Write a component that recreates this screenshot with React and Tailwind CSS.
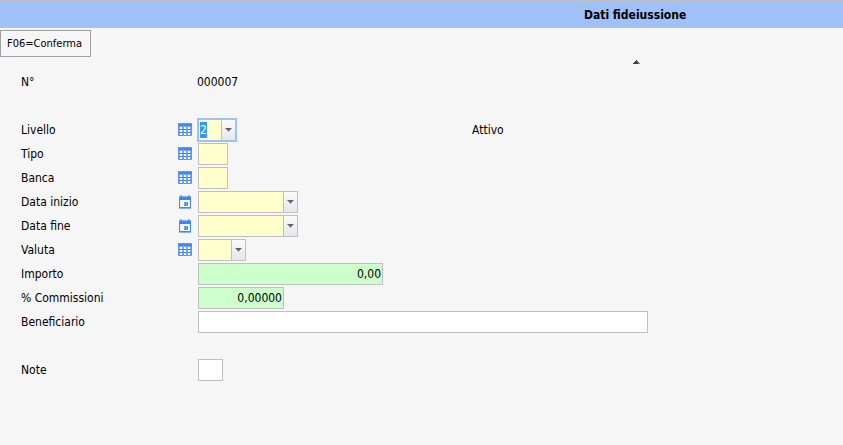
import { useEffect, useRef } from "react";

function GridIcon() {
  return (
    <svg width="14" height="14" viewBox="0 0 14 14" shapeRendering="crispEdges" aria-hidden="true">
      <path fill="#7aa8fa" d="M0 0h14v13H0z" />
      <path fill="#4285f4" d="M0 1h14v2H0zM0 6h14v1H0zM0 9h14v1H0z" />
      <path fill="#5b95f6" d="M1 0h12v1H1zM1 12h12v1H1zM0 3h1v9H0zM13 3h1v9h-1z" />
      <path
        fill="#ffffff"
        d="M2 4h2v2H2zM6 4h2v2H6zM10 4h2v2h-2zM2 7h2v2H2zM6 7h2v2H6zM10 7h2v2h-2zM2 10h2v2H2zM6 10h2v2H6zM10 10h2v2h-2z"
      />
    </svg>
  );
}

function CalendarIcon() {
  return (
    <svg width="14" height="14" viewBox="0 0 14 14" shapeRendering="crispEdges" aria-hidden="true">
      <path fill="#8ab2fb" d="M2 0h2v1H2zM10 0h2v1h-2zM1 1h12v1H1zM1 13h12v1H1z" />
      <path fill="#4285f4" d="M3 1h1v1H3zM10 1h1v1h-1zM1 2h12v3H1zM1 5h1v8H1zM12 5h1v8h-1zM2 12h10v1H2z" />
      <path fill="#f4f8ff" d="M2 5h10v7H2z" />
      <path fill="#6ea2f8" d="M6 7h4v4H6z" />
      <path fill="#4285f4" d="M7 8h3v3H7z" />
      <path fill="#c4d9fd" d="M8 9h1v1H8z" />
    </svg>
  );
}

function Row({ id, label, icon, aside, children }) {
  return (
    <div className="flex h-6 items-center">
      <label htmlFor={id} className="w-[156px] shrink-0">
        {label}
      </label>
      <div className="flex w-5 shrink-0 pl-px">
        {icon && (
          <button type="button" aria-label={`Cerca ${label}`}>
            {icon === "grid" ? <GridIcon /> : <CalendarIcon />}
          </button>
        )}
      </div>
      <div className={aside ? "w-[275px] shrink-0" : "min-w-0 flex-1"}>{children}</div>
      {aside && <span>{aside}</span>}
    </div>
  );
}

function Field({ id, className, value = "" }) {
  return (
    <input
      id={id}
      defaultValue={value}
      className={`ml-px block h-[22px] max-w-full border border-[#c0c0c0] px-px text-right outline-none ${className}`}
    />
  );
}

function Combo({ id, className, inputRef, value = "" }) {
  return (
    <div className={`flex ${className}`}>
      <input
        id={id}
        ref={inputRef}
        defaultValue={value}
        className="min-w-0 flex-1 bg-[#ffffcc] px-px outline-none selection:bg-[#3399ff] selection:text-white"
      />
      <button
        type="button"
        aria-label="Apri elenco"
        className="flex w-[14px] shrink-0 items-center justify-center border-l border-[#c0c0c0] bg-linear-to-b from-[#fafbfc] to-[#e3e8ed]"
      >
        <svg width="7" height="4" viewBox="0 0 7 4" shapeRendering="crispEdges" aria-hidden="true">
          <path fill="#a4a8ad" d="M0 0h7v1H0zM1 1h5v1H1zM2 2h3v1H2zM3 3h1v1H3z" />
          <path fill="#5f646b" d="M1 0h5v1H1zM2 1h3v1H2zM3 2h1v1H3z" />
        </svg>
      </button>
    </div>
  );
}

export default function App() {
  const level = useRef(null);

  useEffect(() => {
    level.current.focus();
    level.current.select();
  }, []);

  return (
    <div className="min-h-screen overflow-hidden bg-[#f6f6f6] font-['DejaVu_Sans_Condensed','DejaVu_Sans',sans-serif] text-[12px] leading-4 text-black">
      <header className="flex h-7 items-center border-y border-[#c0c0c0] bg-[#a0c0f8] pt-0.5 pl-[584px]">
        <h1 className="font-bold whitespace-nowrap">Dati fideiussione</h1>
      </header>

      <div className="pt-0.5">
        <button
          type="button"
          className="block h-[27px] w-[91px] border border-[#a0a0a4] pl-1.5 text-left text-[11px] whitespace-nowrap"
        >
          F06=Conferma
        </button>
      </div>

      <div className="flex h-[13px] items-start pt-[3px] pl-[633px]">
        <svg width="7" height="4" viewBox="0 0 7 4" shapeRendering="crispEdges" aria-hidden="true">
          <path fill="#404040" d="M3 0h1v1H3zM2 1h3v1H2zM1 2h5v1H1zM0 3h7v1H0z" />
          <path fill="#808080" d="M4 1h1v1H4zM5 2h1v1H5zM5 3h2v1H5z" />
        </svg>
      </div>

      <form className="pl-[21px]">
        <Row label="N°" id="numero">
          <output id="numero">000007</output>
        </Row>
        <div className="h-6" />
        <Row label="Livello" id="livello" icon="grid" aside="Attivo">
          <Combo id="livello" inputRef={level} value="2" className="h-6 w-10 border-2 border-[#a0c0f8]" />
        </Row>
        <Row label="Tipo" id="tipo" icon="grid">
          <Field id="tipo" className="w-[30px] bg-[#ffffcc]" />
        </Row>
        <Row label="Banca" id="banca" icon="grid">
          <Field id="banca" className="w-[30px] bg-[#ffffcc]" />
        </Row>
        <Row label="Data inizio" id="inizio" icon="calendar">
          <Combo id="inizio" className="ml-px h-[22px] w-[100px] border border-[#c0c0c0]" />
        </Row>
        <Row label="Data fine" id="fine" icon="calendar">
          <Combo id="fine" className="ml-px h-[22px] w-[100px] border border-[#c0c0c0]" />
        </Row>
        <Row label="Valuta" id="valuta" icon="grid">
          <Combo id="valuta" className="ml-px h-[22px] w-12 border border-[#c0c0c0]" />
        </Row>
        <Row label="Importo" id="importo">
          <Field id="importo" value="0,00" className="w-[185px] bg-[#ccffcc]" />
        </Row>
        <Row label="% Commissioni" id="commissioni">
          <Field id="commissioni" value="0,00000" className="w-[86px] bg-[#ccffcc]" />
        </Row>
        <Row label="Beneficiario" id="beneficiario">
          <Field id="beneficiario" className="w-[450px] bg-white" />
        </Row>
        <div className="h-6" />
        <Row label="Note" id="note">
          <Field id="note" className="w-[25px] bg-white" />
        </Row>
      </form>
    </div>
  );
}
